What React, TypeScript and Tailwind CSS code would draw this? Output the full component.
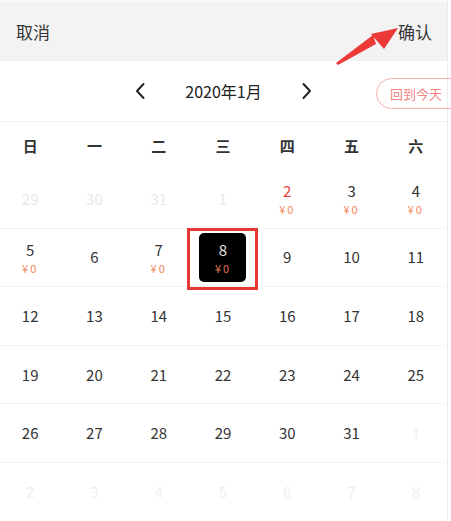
import React from "react";

type Day = {
  n: number;
  kind?: "off" | "far" | "red";
  price?: boolean;
  selected?: boolean;
};

const WEEK = ["日", "一", "二", "三", "四", "五", "六"];

const ROWS: Day[][] = [
  [
    { n: 29, kind: "off" },
    { n: 30, kind: "off" },
    { n: 31, kind: "off" },
    { n: 1, kind: "off" },
    { n: 2, kind: "red", price: true },
    { n: 3, price: true },
    { n: 4, price: true },
  ],
  [
    { n: 5, price: true },
    { n: 6 },
    { n: 7, price: true },
    { n: 8, price: true, selected: true },
    { n: 9 },
    { n: 10 },
    { n: 11 },
  ],
  [12, 13, 14, 15, 16, 17, 18].map((n) => ({ n })),
  [19, 20, 21, 22, 23, 24, 25].map((n) => ({ n })),
  [
    ...[26, 27, 28, 29, 30, 31].map((n) => ({ n })),
    { n: 1, kind: "far" as const },
  ],
  [2, 3, 4, 5, 6, 7, 8].map((n) => ({ n, kind: "far" as const })),
];

function DayCell({ day }: { day: Day }) {
  const numColor =
    day.kind === "off"
      ? "text-[#e8e8e8]"
      : day.kind === "far"
        ? "text-[#efefef]"
        : day.kind === "red"
          ? "text-[#e8413c]"
          : day.selected
            ? "text-[#e6e6e6]"
            : "text-[#333]";

  const inner = (
    <div className="flex flex-col items-center">
      <span className={`text-[15px] leading-[20px] ${numColor}`}>{day.n}</span>
      {day.price && (
        <span
          className={`mt-[1px] text-[11px] leading-[14px] tracking-[2px] ${
            day.selected ? "text-[#e0744c]" : "text-[#f0855c]"
          }`}
        >
          ¥0
        </span>
      )}
    </div>
  );

  return (
    <div className="relative flex items-center justify-center">
      {day.selected ? (
        <>
          <div className="flex h-[49px] w-[47px] items-center justify-center rounded-[5px] bg-black">
            {inner}
          </div>
          <div className="absolute -left-[4px] -right-[3px] -top-[1px] -bottom-[4px] border-[3px] border-[#e53935]" />
        </>
      ) : (
        inner
      )}
    </div>
  );
}

export default function App() {
  return (
    <div
      className="relative h-[521px] w-[451px] overflow-hidden bg-white"
      style={{ fontFamily: '"Noto Sans CJK SC", "Noto Sans", sans-serif' }}
    >
      <div className="w-[448px] border-r border-[#ececec]">
        {/* top bar */}
        <div className="border-t-2 border-[#fafafa] bg-[#f3f3f3]">
          <div className="flex h-[59px] items-center justify-between px-4 text-[17px] text-[#333]">
            <span>取消</span>
            <span className="-mr-[1px]">确认</span>
          </div>
        </div>

        {/* month switcher */}
        <div className="relative flex h-[61px] items-center justify-center border-b border-[#f3f3f3]">
          <div className="flex items-center gap-[39px] text-[#222]">
            <svg width="12" height="18" viewBox="0 0 12 18" fill="none">
              <path d="M9.5 2 L3 9 L9.5 16" stroke="#222" strokeWidth="2" strokeLinecap="round" strokeLinejoin="round" />
            </svg>
            <span className="text-[16px]">2020年1月</span>
            <svg width="12" height="18" viewBox="0 0 12 18" fill="none">
              <path d="M2.5 2 L9 9 L2.5 16" stroke="#222" strokeWidth="2" strokeLinecap="round" strokeLinejoin="round" />
            </svg>
          </div>
          <div className="absolute left-[376px] top-[17px] flex h-[31px] w-[100px] items-center rounded-full border border-[#f3b1b1] pl-[13px] text-[13px] text-[#f08585]">
            回到今天
          </div>
        </div>

        {/* week header */}
        <div className="-ml-[2px] grid h-[48px] w-[450px] grid-cols-7 items-center text-[15px] font-bold text-[#333]">
          {WEEK.map((w) => (
            <span key={w} className="text-center">
              {w}
            </span>
          ))}
        </div>

        {/* days */}
        <div>
          {ROWS.map((row, i) => (
            <div
              key={i}
              className={`-ml-[2px] grid h-[58.6px] w-[450px] grid-cols-7 ${
                i < ROWS.length - 1 ? "border-b border-[#f3f3f3]" : ""
              }`}
            >
              {row.map((d, j) => (
                <DayCell key={j} day={d} />
              ))}
            </div>
          ))}
        </div>
      </div>

      {/* annotation arrow */}
      <svg className="pointer-events-none absolute left-0 top-0" width="451" height="521">
        <polygon points="336,63 338,65 376,44 373,35" fill="#ee3a36" />
        <polygon points="398,28 371,34 384,49" fill="#ee3a36" />
      </svg>
    </div>
  );
}
